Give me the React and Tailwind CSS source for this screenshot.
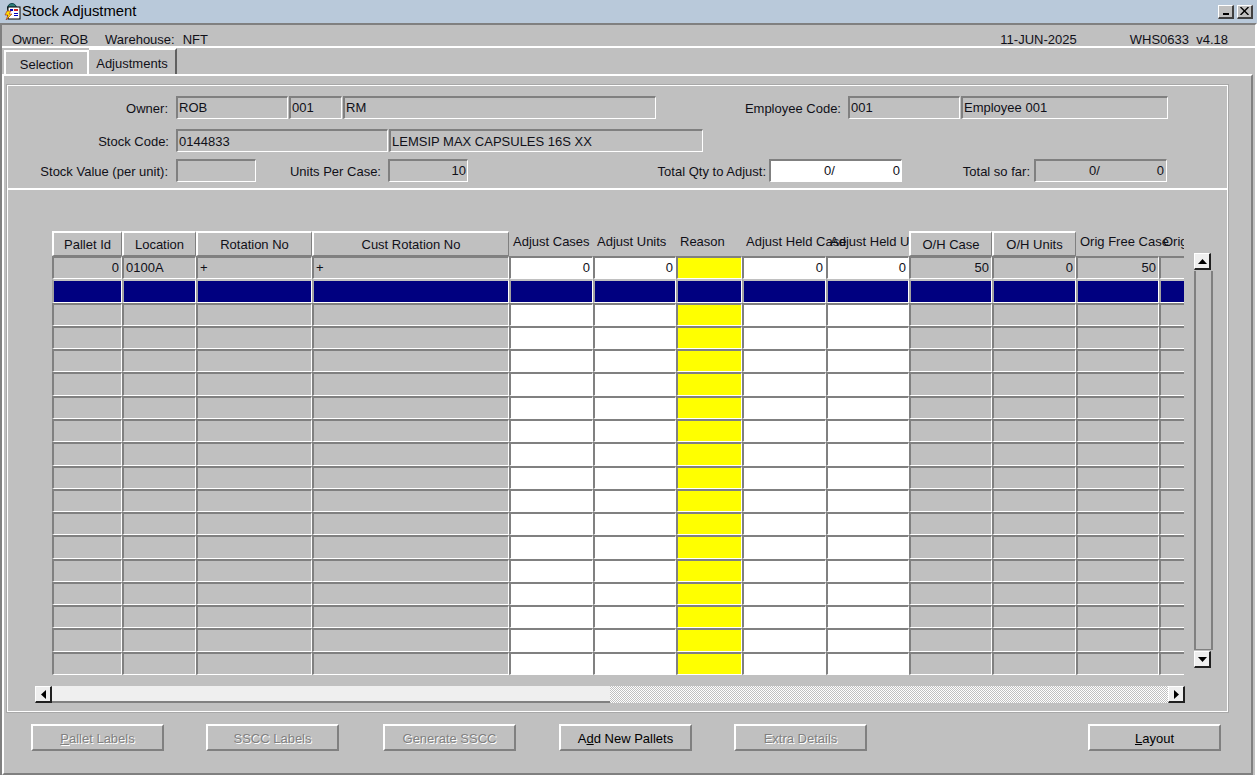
const columns = [
  { w: "Pallet Id", boxed: true },
  { w: "Location", boxed: true },
  { w: "Rotation No", boxed: true },
  { w: "Cust Rotation No", boxed: true },
  { w: "Adjust Cases" },
  { w: "Adjust Units" },
  { w: "Reason" },
  { w: "Adjust Held Case" },
  { w: "Adjust Held U" },
  { w: "O/H Case", boxed: true },
  { w: "O/H Units", boxed: true },
  { w: "Orig Free Case" },
  { w: "Orig" },
];

const firstRow = ["0", "0100A", "+", "+", "0", "0", "", "0", "0", "50", "0", "50", ""];
const rightAligned = [0, 4, 5, 7, 8, 9, 10, 11, 12];
const whiteCols = [4, 5, 7, 8];
const yellowCol = 6;

function TitleButton({ children }) {
  return (
    <div className="w-[16px] h-[14px] bg-[#c0c0c0] border-t border-l border-t-white border-l-white border-r-2 border-b-2 border-r-[#404040] border-b-[#404040] flex items-center justify-center">
      {children}
    </div>
  );
}

function Field({ w, children, right, white, ml }) {
  return (
    <div
      className={`${w} ${ml || ""} h-[23px] shrink-0 border-t-2 border-l-2 border-t-[#808080] border-l-[#808080] border-b border-r border-b-white border-r-white px-[1px] flex items-center whitespace-nowrap ${right ? "justify-end" : ""} ${white ? "bg-white" : ""}`}
    >
      {children}
    </div>
  );
}

function Label({ w, children }) {
  return (
    <div className={`${w} shrink-0 text-right whitespace-nowrap`}>
      <span className="relative top-[1px]">{children}</span>
    </div>
  );
}

function Cell({ col, row }) {
  let bg = "";
  let text = "";
  if (row === 1) bg = "bg-[#000080]";
  else if (col === yellowCol) bg = "bg-[#ffff00]";
  else if (whiteCols.includes(col)) bg = "bg-white";
  if (row === 0) text = firstRow[col];
  return (
    <div
      className={`min-w-0 border-t-2 border-l-2 border-b border-r border-b-white border-r-white flex items-center pl-[2px] pr-[2px] whitespace-nowrap overflow-hidden ${row === 1 ? "border-t-[#c0c0c0] border-l-[#a0a0a0]" : "border-t-[#808080] border-l-[#808080]"} ${rightAligned.includes(col) ? "justify-end" : ""} ${bg}`}
    >
      {text}
    </div>
  );
}

function HeaderCell({ col }) {
  if (col.boxed) {
    return (
      <div className="relative z-10 bg-[#c0c0c0] border-t-2 border-l-2 border-t-white border-l-white border-b border-r border-b-[#808080] border-r-[#808080] flex items-center justify-center whitespace-nowrap pt-[2px]">
        {col.w}
      </div>
    );
  }
  return <div className="pl-[4px] pt-[2px] whitespace-nowrap leading-[17px]">{col.w}</div>;
}

function SmallArrow({ dir }) {
  const pts = {
    up: "0,5 9,5 4.5,0",
    down: "0,0 9,0 4.5,5",
    left: "5,0 5,9 0,4.5",
    right: "0,0 0,9 5,4.5",
  }[dir];
  const vertical = dir === "up" || dir === "down";
  return (
    <svg width={vertical ? 9 : 5} height={vertical ? 5 : 9} viewBox={vertical ? "0 0 9 5" : "0 0 5 9"}>
      <polygon points={pts} fill="#000" />
    </svg>
  );
}

function ScrollButton({ dir, className }) {
  return (
    <div
      className={`w-[17px] h-[17px] shrink-0 bg-[#efefef] border-t border-l border-t-white border-l-white border-r-2 border-b-2 border-r-[#202020] border-b-[#202020] flex items-center justify-center ${className || ""}`}
    >
      <SmallArrow dir={dir} />
    </div>
  );
}

function ActionButton({ children, disabled, ml }) {
  return (
    <div
      className={`w-[133px] h-[27px] shrink-0 ${ml} pt-[2px] border-t-2 border-l-2 border-t-white border-l-white border-b-2 border-r-2 border-b-[#808080] border-r-[#808080] flex items-center justify-center whitespace-nowrap ${disabled ? "text-[#808080] [text-shadow:1px_1px_0_#fff]" : "text-black"}`}
    >
      {children}
    </div>
  );
}

function AppIcon() {
  return (
    <svg width="18" height="18" viewBox="0 0 18 18" className="shrink-0">
      <circle cx="9" cy="5" r="4.5" fill="#2f7f7a" stroke="#12404a" strokeWidth="1" />
      <rect x="5" y="4" width="12" height="12" fill="#fff" stroke="#000" strokeWidth="1" />
      <rect x="7" y="6" width="3" height="2" fill="#0000c0" />
      <rect x="11" y="6" width="4" height="2" fill="#d02020" />
      <rect x="11" y="10" width="4" height="1" fill="#0000c0" />
      <rect x="11" y="12" width="4" height="1" fill="#0000c0" />
      <polygon points="4,8 8,8 6,11 9,11 3,17 5,12 2,12" fill="#ffe000" stroke="#a02020" strokeWidth="0.6" />
    </svg>
  );
}

export default function App() {
  const rows = Array.from({ length: 18 }, (_, i) => i);
  return (
    <div className="w-[1257px] h-[775px] overflow-hidden bg-[#c0c0c0] text-[#101018] text-[13px] flex flex-col font-['Liberation_Sans',Arial,sans-serif]">
      {/* title bar */}
      <div className="h-[23px] shrink-0 bg-[#b9c9da] flex items-center pl-[3px] pr-[4px]">
        <AppIcon />
        <span className="ml-[1px] text-[14.8px] text-black">Stock Adjustment</span>
        <div className="ml-auto flex gap-[3px]">
          <TitleButton>
            <div className="w-[6px] h-[2px] bg-black mt-[6px]" />
          </TitleButton>
          <TitleButton>
            <svg width="9" height="8" viewBox="0 0 9 8">
              <path d="M0.5 0 L8.5 8 M8.5 0 L0.5 8" stroke="#000" strokeWidth="1.4" />
            </svg>
          </TitleButton>
        </div>
      </div>

      {/* window frame */}
      <div className="flex-1 min-h-0 flex flex-col border-t-2 border-t-[#808080] border-l-2 border-l-[#808080] border-r-2 border-r-white">
        {/* owner strip */}
        <div className="h-[23px] shrink-0 flex items-center pl-[10px] pr-[27px] pt-[8px] border-b-2 border-b-white">
          <span>Owner:</span>
          <span className="ml-[6px]">ROB</span>
          <span className="ml-[17px]">Warehouse:</span>
          <span className="ml-[8px]">NFT</span>
          <span className="ml-auto">11-JUN-2025</span>
          <span className="ml-[53px]">WHS0633&nbsp; v4.18</span>
        </div>

        {/* tabs */}
        <div className="h-[26px] shrink-0 flex items-end pl-[2px]">
          <div className="w-[85px] h-[24px] border-t-2 border-l-2 border-r-2 border-t-white border-l-white border-r-white flex items-center justify-center pt-[3px]">
            Selection
          </div>
          <div className="w-[88px] h-[26px] border-t-2 border-t-white border-r-2 border-r-[#606060] flex items-center justify-center pt-[3px]">
            Adjustments
          </div>
        </div>

        {/* tab page */}
        <div className="flex-1 min-h-0 flex flex-col border-t-2 border-t-white border-l-2 border-l-white border-r-2 border-r-[#808080] border-b-2 border-b-[#808080] mr-[2px]">
          {/* content panel */}
          <div className="h-[629px] shrink-0 mt-[8px] ml-[2px] mr-[22px] border border-[#a8a8a8] shadow-[inset_0_0_0_1px_#ffffff] flex flex-col">
            {/* header form */}
            <div className="h-[105px] shrink-0 border-b-2 border-b-white pt-[11px] pl-[3px] flex flex-col">
              <div className="flex items-center">
                <Label w="w-[158px]">Owner:</Label>
                <Field w="w-[112px]" ml="ml-[8px]">ROB</Field>
                <Field w="w-[53px]" ml="ml-[1px]">001</Field>
                <Field w="w-[313px]" ml="ml-[1px]">RM</Field>
                <Label w="w-[185px]">Employee Code:</Label>
                <Field w="w-[112px]" ml="ml-[7px]">001</Field>
                <Field w="w-[207px]" ml="ml-[1px]">Employee 001</Field>
              </div>
              <div className="flex items-center mt-[10px]">
                <Label w="w-[159px]">Stock Code:</Label>
                <Field w="w-[212px]" ml="ml-[7px]"><span className="relative top-[1px]">0144833</span></Field>
                <Field w="w-[314px]" ml="ml-[1px]"><span className="relative top-[1px]">LEMSIP MAX CAPSULES 16S XX</span></Field>
              </div>
              <div className="flex items-center mt-[7px]">
                <Label w="w-[158px]">Stock Value (per unit):</Label>
                <Field w="w-[80px]" ml="ml-[8px]" />
                <Label w="w-[125px]">Units Per Case:</Label>
                <Field w="w-[80px]" ml="ml-[7px]" right>10</Field>
                <Label w="w-[298px]">Total Qty to Adjust:</Label>
                <Field w="w-[133px]" ml="ml-[3px]" white right>
                  <span className="mr-[58px]">0/</span>
                  <span>0</span>
                </Field>
                <Label w="w-[128px]">Total so far:</Label>
                <Field w="w-[133px]" ml="ml-[4px]" right>
                  <span className="mr-[57px]">0/</span>
                  <span className="mr-[1px]">0</span>
                </Field>
              </div>
            </div>

            {/* multi-row block */}
            <div className="flex-1 min-h-0 flex flex-col">
              <div className="flex mt-[41px] ml-[45px]">
                <div className="w-[1132px] h-[444px] overflow-hidden">
                  <div className="w-[1214px] h-[444px] grid grid-cols-[70px_74px_116px_197px_84px_83px_66px_84px_83px_83px_84px_83px_82px] grid-rows-[25px_repeat(18,minmax(0,1fr))]">
                    {columns.map((c) => (
                      <HeaderCell key={c.w} col={c} />
                    ))}
                    {rows.map((r) =>
                      columns.map((c, i) => <Cell key={`${r}-${c.w}`} col={i} row={r} />)
                    )}
                  </div>
                </div>
                {/* vertical scrollbar */}
                <div className="w-[19px] h-[415px] ml-[10px] mt-[22px] flex flex-col">
                  <ScrollButton dir="up" />
                  <div className="flex-1 my-[1px] w-[19px] border-x-2 border-x-[#808080] border-b border-b-[#808080]" />
                  <ScrollButton dir="down" />
                </div>
              </div>

              {/* horizontal scrollbar */}
              <div className="flex h-[17px] w-[1150px] mt-[11px] ml-[28px]">
                <ScrollButton dir="left" />
                <div className="w-[558px] bg-[#efefef] border-b-2 border-b-[#808080]" />
                <div className="flex-1 bg-[repeating-conic-gradient(#ffffff_0_25%,#c0c0c0_0_50%)] bg-[length:2px_2px]" />
                <ScrollButton dir="right" />
              </div>
            </div>
          </div>

          {/* buttons */}
          <div className="flex mt-[11px] ml-[27px]">
            <ActionButton disabled ml="ml-0"><span><u>P</u>allet Labels</span></ActionButton>
            <ActionButton disabled ml="ml-[42px]">SSCC Labels</ActionButton>
            <ActionButton disabled ml="ml-[44px]">Generate SSCC</ActionButton>
            <ActionButton ml="ml-[43px]"><span>A<u>d</u>d New Pallets</span></ActionButton>
            <ActionButton disabled ml="ml-[42px]">Extra Details</ActionButton>
            <ActionButton ml="ml-[221px]"><span><u>L</u>ayout</span></ActionButton>
          </div>
        </div>
      </div>
    </div>
  );
}
